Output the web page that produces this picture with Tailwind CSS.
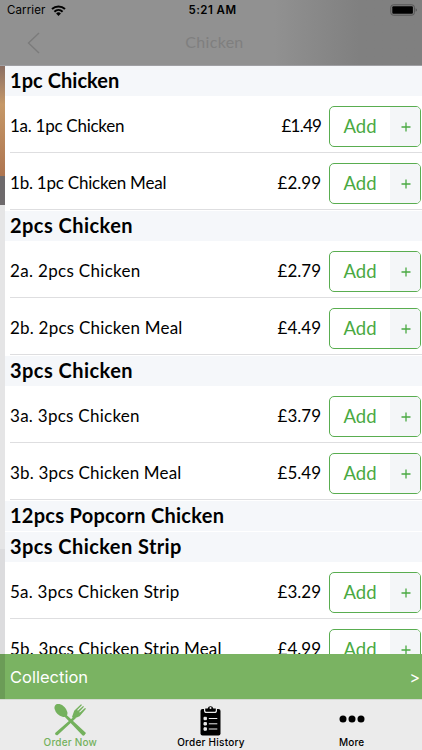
<!DOCTYPE html>
<html lang="en">
<head>
<meta charset="utf-8">
<title>Chicken</title>
<script src="https://cdn.jsdelivr.net/npm/@tailwindcss/browser@4"></script>
</head>
<body class="w-[422px] h-[750px] overflow-hidden bg-[#ebebeb] text-black font-[Lato,sans-serif]">
<div class="relative flex flex-col w-[422px] h-[750px]">
  <header class="h-[66px] shrink-0 bg-linear-to-r from-[#919191] from-65% to-[#808080] to-85% border-b border-[#a0a0a4] font-[Inter,sans-serif]">
    <div class="grid grid-cols-3 items-center h-[22px] pl-[7px] pr-[5px] text-[11.5px]">
      <div class="flex items-center gap-[6px]"><span class="tracking-[0.1px]">Carrier</span>
        <svg class="w-[15px] h-[11px] -mt-[2px]" viewBox="0 0 15 11"><g fill="none" stroke="#000" stroke-width="2"><path d="M1 4.1a9.5 9.5 0 0 1 13 0"/><path d="M3.400 6.700a6 6 0 0 1 8.200 0"/></g><path d="M5.100 8.400a3.600 3.600 0 0 1 4.800 0L7.500 10.900z"/></svg>
      </div>
      <div class="text-center font-semibold tracking-[0.45px] pl-px">5:21 AM</div>
      <div class="flex justify-end"><svg class="w-[28px] h-[12px] -mr-[1px] -mt-[2px]" viewBox="0 0 28 12"><rect x=".8" y=".8" width="23.600" height="10.400" rx="2.600" fill="none" stroke="#555"/><rect x="2.300" y="2.300" width="20.600" height="7.400" rx="1"/><path d="M25.600 4.200c1.800.6 1.800 3 0 3.600z" fill="#555"/></svg></div>
    </div>
    <div class="grid grid-cols-3 items-center h-[43px]">
      <svg class="ml-[27px] w-[13px] h-[22px] -mt-[2px]" viewBox="0 0 13 22" fill="none" stroke="#7b7b7b" stroke-width="1.400"><path d="M12 1 1.500 11 12 21"/></svg>
      <div class="text-center text-[16px] text-[#7f7f7f] font-[Lato,sans-serif] tracking-[0.3px] pl-[7px] -mt-[3px]">Chicken</div>
    </div>
  </header>
  <div class="flex h-[588px] shrink-0 overflow-hidden">
    <aside class="w-[5px] shrink-0 flex flex-col">
      <div class="h-[110px] bg-linear-to-b from-[#8a6e62] via-[#c59868] via-35% to-[#ae7550]"></div>
      <div class="h-[29px] bg-[#6e6a6c]"></div>
      <div class="h-[344px] bg-[#e5e5e6]"></div>
      <div class="grow bg-[#dcdcde]"></div>
    </aside>
    <main id="menu" class="flex flex-col w-[417px] shrink-0 bg-white"></main>
  </div>
  <div class="flex h-[45px] shrink-0">
    <div class="w-[5px] bg-[#6b9c57]"></div>
    <div class="flex grow items-center justify-between bg-[#7ab362] pl-[5px] pr-[2px] pt-[1px] text-white font-[Inter,sans-serif] text-[16.500px]"><span>Collection</span><span class="text-[16px]">&gt;</span></div>
  </div>
  <nav class="grid grid-cols-3 h-[51px] shrink-0 border-t border-[#d5dbd2] bg-[#ebebeb] text-[10px] font-medium font-[Inter,sans-serif]">
    <div class="flex flex-col items-center pt-[4px] text-[#74b15d]">
      <svg class="w-[33px] h-[32px]" viewBox="0 0 33 32" fill="#74b15d"><g transform="rotate(-45 5.700 5.200)"><ellipse cx="5.700" cy="7" rx="4.900" ry="7.800"/></g><path d="m9 11 2-1.600L32 29l-1.600 2.300c-.7.6-1.800.4-2.300-.4z"/><path d="m19.800 12.700 2 1.600L4 30.800c-.8.8-2 .6-2.600-.3s-.3-1.500.3-2.100z"/><path d="m18 12.900 2.200-6.200L27 .2l1 .8-4.800 5 .7.7 5.200-4.800.9.9-4.900 5.100.8.7L31 3.900l1 .9-6.400 7.400-5.900 2.500z"/></svg>
      <span class="leading-[13px] tracking-[0.2px]">Order Now</span>
    </div>
    <div class="flex flex-col items-center pt-[5px]">
      <svg class="w-[21px] h-[31px]" viewBox="0 0 21 31"><rect x=".5" y="4" width="20" height="26.500" rx="2"/><path d="M4 3.500h13v2.200c0 1.400-1 2.300-2.200 2.300H6.200C5 8 4 7.100 4 5.700z" fill="#ebebeb"/><path d="M5.200 3.500h2.500a2.900 2.900 0 0 1 5.600 0h2.500v1.700c0 1-.7 1.600-1.500 1.600H6.700c-.8 0-1.500-.6-1.500-1.600z"/><circle cx="10.500" cy="3" r="1" fill="#ebebeb"/><g fill="none" stroke="#ebebeb" stroke-width="1"><path d="M8.800 13.500h8.500M8.800 18.800h8.500M8.800 24h8.500"/><path fill="#ebebeb" d="M4 12.300h2.400v2.400H4zM4 17.600h2.400V20H4zM4 22.800h2.400v2.400H4z"/></g></svg>
      <span class="leading-[13px] tracking-[0.25px]">Order History</span>
    </div>
    <div class="flex flex-col items-center">
      <svg class="mt-[15px] w-[26px] h-[8px]" viewBox="0 0 26 8"><circle cx="4" cy="4" r="3.500"/><circle cx="13" cy="4" r="3.500"/><circle cx="22" cy="4" r="3.500"/></svg>
      <span class="leading-[13px] mt-[13px] tracking-[0.1px]">More</span>
    </div>
  </nav>
</div>
<script>
const groups = [
  ["1pc Chicken", "tracking-[0.05px]", [["1a. 1pc Chicken", "tracking-[-0.27px]", "£1.49", "tracking-[-0.8px]"], ["1b. 1pc Chicken Meal", "tracking-[-0.22px]", "£2.99", ""]]],
  ["2pcs Chicken", "tracking-[0.45px]", [["2a. 2pcs Chicken", "tracking-[0.32px]", "£2.79", ""], ["2b. 2pcs Chicken Meal", "tracking-[0.22px]", "£4.49", ""]]],
  ["3pcs Chicken", "tracking-[0.45px]", [["3a. 3pcs Chicken", "tracking-[0.27px]", "£3.79", ""], ["3b. 3pcs Chicken Meal", "tracking-[0.17px]", "£5.49", ""]]],
  ["12pcs Popcorn Chicken", "tracking-[0.27px]", []],
  ["3pcs Chicken Strip", "tracking-[0.42px]", [["5a. 3pcs Chicken Strip", "tracking-[0.22px]", "£3.29", ""], ["5b. 3pcs Chicken Strip Meal", "tracking-[0.17px]", "£4.99", ""]]]
];
document.getElementById("menu").innerHTML = groups.map(([name, space, items]) => `
  <h2 class="flex items-center h-[30px] mb-px shrink-0 pl-[5px] pb-[3px] bg-[#f5f7fa] text-[20px] leading-[24px] font-bold whitespace-nowrap ${space}">${name}</h2>
  ${items.map(([n, ns, p, ps], i) => `<div class="flex items-center shrink-0 h-[57px] ml-[5px] border-b border-[#dedee0] pr-px ${i === 0 ? "-mt-px" : "mb-px"}">
    <span class="text-[17px] pt-[4px] whitespace-nowrap ${ns}">${n}</span>
    <span class="ml-auto mr-[8px] text-[17px] pt-[4px] ${ps}">${p}</span>
    <div class="flex w-[92px] h-[41px] mt-[4px] shrink-0 border border-[#59ad50] rounded-[5px] overflow-hidden text-[#4aa942]">
      <span class="flex items-center justify-center w-[60px] text-[18.500px] pt-px">Add</span>
      <span class="flex items-center justify-center grow bg-[#f4f6f8] pt-[2px] pl-px"><svg class="w-[10px] h-[10px]" viewBox="0 0 10 10" stroke="#4aa942" stroke-width="1.300"><path d="M5 .5v9M.5 5h9"/></svg></span>
    </div>
  </div>`).join("")}`).join("");
</script>
</body>
</html>
